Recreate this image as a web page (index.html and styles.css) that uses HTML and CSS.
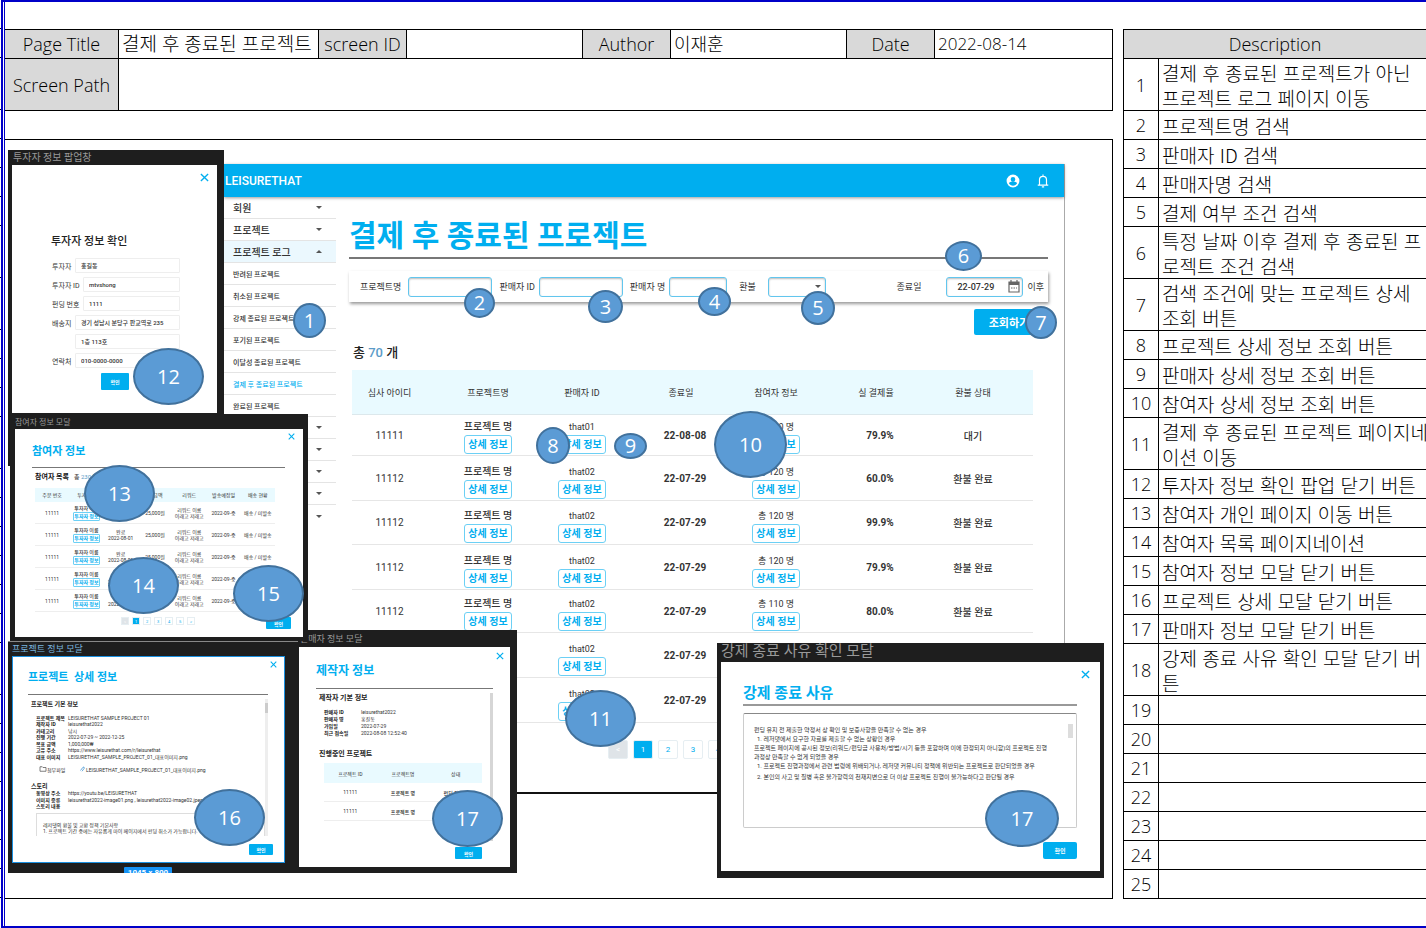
FILE: index.html
```
<!DOCTYPE html>
<html lang="ko">
<head>
<meta charset="utf-8">
<title>결제 후 종료된 프로젝트</title>
<link rel="stylesheet" href="styles.css">
</head>
<body>
<svg class="defs" aria-hidden="true">
  <symbol id="x" viewBox="0 0 10 10"><path d="M1 1L9 9M9 1L1 9" fill="none" stroke="#00aeef" stroke-width="1.5"/></symbol>
  <symbol id="down" viewBox="0 0 8 4"><path d="M0 0H8L4 4Z" fill="#555"/></symbol>
  <symbol id="up" viewBox="0 0 8 4"><path d="M0 4H8L4 0Z" fill="#555"/></symbol>
</svg>
<div class="sheet">
  <div class="gutter"><i class="first"></i><i></i><i class="tall"></i><i></i><i></i><i></i><i></i><i class="tall"></i><i class="tall"></i><i></i><i></i><i></i><i class="tall"></i><i></i><i></i><i></i><i></i><i></i><i></i><i class="tall"></i><i></i><i></i><i></i><i></i><i></i><i></i><i></i></div>
  <div class="frame">
    <main class="left">
      <table class="meta">
        <colgroup><col class="c1"><col class="c2"><col class="c3"><col class="c4"><col class="c3"><col class="c4"><col class="c3"><col></colgroup>
        <tr><th>Page Title</th><td class="ko">결제 후 종료된 프로젝트</td><th>screen ID</th><td></td><th>Author</th><td>이재훈</td><th>Date</th><td class="date">2022-08-14</td></tr>
        <tr class="path"><th>Screen Path</th><td colspan="7"></td></tr>
      </table>

      <div class="canvas">
        <section class="app">
          <header class="appbar"><b>LEISURETHAT</b>
            <svg class="user" viewBox="0 0 24 24"><path fill="#fff" fill-rule="evenodd" d="M12 1a11 11 0 1 0 0 22a11 11 0 0 0 0-22zM12 5a4 4 0 1 1 0 8a4 4 0 0 1 0-8zM12 20c-3 0-5.600-1.500-7-4c0-2.300 4.700-3.300 7-3.300s7 1 7 3.300c-1.400 2.500-4 4-7 4z"/></svg>
            <svg class="bell" viewBox="0 0 24 24"><path fill="none" stroke="#fff" stroke-width="2" d="M3 19H21M6 19V10a6 6 0 0 1 12 0V19M12 1V4M10 22H14"/></svg>
          </header>
          <div class="appbody">
            <nav class="side">
              <a class="top">회원<svg><use href="#down"/></svg></a>
              <a class="top">프로젝트<svg><use href="#down"/></svg></a>
              <a class="top open">프로젝트 로그<svg><use href="#up"/></svg></a>
              <a>반려된 프로젝트</a><a>취소된 프로젝트</a><a>강제 종료된 프로젝트</a><a>포기된 프로젝트</a><a>이달성 종료된 프로젝트</a><a class="now">결제 후 종료된 프로젝트</a><a>완료된 프로젝트</a>
              <a class="top"><svg><use href="#down"/></svg></a>
              <a class="top"><svg><use href="#down"/></svg></a>
              <a class="top"><svg><use href="#down"/></svg></a>
              <a class="top"><svg><use href="#down"/></svg></a>
              <a class="top last"><svg><use href="#down"/></svg></a>
            </nav>
            <div class="content">
              <h1>결제 후 종료된 프로젝트</h1>
              <form class="filter">
                <label for="f1">프로젝트명</label><input id="f1" class="wide">
                <label for="f2">판매자 ID</label><input id="f2" class="wide">
                <label for="f3">판매자 명</label><input id="f3" class="mid">
                <label for="f4" class="lb4">환불</label><span class="pick"><select id="f4" class="mid"><option></option></select><svg><use href="#down"/></svg></span>
                <label for="f5" class="end">종료일</label><span class="datebox"><input id="f5" value="22-07-29"><svg viewBox="0 0 12 13"><path d="M1 2H11V12H1ZM3 0V2M9 0V2" fill="none" stroke="#666" stroke-width="1.200"/><path d="M1 2H11V5H1Z" fill="#666"/><path d="M3 8H9" stroke="#666" stroke-dasharray="1.500 1"/></svg></span><span class="after">이후</span>
              </form>
              <button class="search">조회하기</button>
              <p class="count">총 <span>70</span> 개</p>
              <table class="list">
                <colgroup><col class="l1"><col class="l2"><col class="l3"><col class="l4"><col class="l5"><col class="l6"><col></colgroup>
                <tr><th>심사 아이디</th><th>프로젝트명</th><th>판매자 ID</th><th>종료일</th><th>참여자 정보</th><th>실 결제율</th><th>환불 상태</th></tr>
                <tr class="r1"><td>11111</td><td class="s"><b>프로젝트 명</b><button>상세 정보</button></td><td class="s">that01<button>상세 정보</button></td><td class="n">22-08-08</td><td class="s">총 120 명<button>상세 정보</button></td><td class="n">79.9%</td><td class="k">대기</td></tr>
                <tr><td>11112</td><td class="s"><b>프로젝트 명</b><button>상세 정보</button></td><td class="s">that02<button>상세 정보</button></td><td class="n">22-07-29</td><td class="s">총 120 명<button>상세 정보</button></td><td class="n">60.0%</td><td class="k">환불 완료</td></tr>
                <tr class="r3"><td>11112</td><td class="s"><b>프로젝트 명</b><button>상세 정보</button></td><td class="s">that02<button>상세 정보</button></td><td class="n">22-07-29</td><td class="s">총 120 명<button>상세 정보</button></td><td class="n">99.9%</td><td class="k">환불 완료</td></tr>
                <tr><td>11112</td><td class="s"><b>프로젝트 명</b><button>상세 정보</button></td><td class="s">that02<button>상세 정보</button></td><td class="n">22-07-29</td><td class="s">총 120 명<button>상세 정보</button></td><td class="n">79.9%</td><td class="k">환불 완료</td></tr>
                <tr class="r5"><td>11112</td><td class="s"><b>프로젝트 명</b><button>상세 정보</button></td><td class="s">that02<button>상세 정보</button></td><td class="n">22-07-29</td><td class="s">총 110 명<button>상세 정보</button></td><td class="n">80.0%</td><td class="k">환불 완료</td></tr>
                <tr><td></td><td></td><td class="s">that02<button>상세 정보</button></td><td class="n">22-07-29</td><td></td><td></td><td></td></tr>
                <tr><td></td><td></td><td class="s">that02<button>상세 정보</button></td><td class="n">22-07-29</td><td></td><td></td><td></td></tr>
              </table>
              <div class="pager"><button class="prev">&lt;</button><button class="on">1</button><button>2</button><button>3</button><button>4</button></div>
            </div>
          </div>
        </section>

        <section class="board bA">
          <h6>투자자 정보 팝업창</h6>
          <div class="modal">
            <svg class="close"><use href="#x"/></svg>
            <h2>투자자 정보 확인</h2>
            <div class="row"><label for="a1">투자자</label><input id="a1" value="홍길동"></div>
            <div class="row long"><label for="a2">투자자 ID</label><input id="a2" value="mtvshong"></div>
            <div class="row long"><label for="a3">펀딩 번호</label><input id="a3" value="1111"></div>
            <div class="row"><label for="a4">배송지</label><input id="a4" value="경기 성남시 분당구 판교역로 235"></div>
            <div class="row"><label for="a5"></label><input id="a5" value="1층 113호"></div>
            <div class="row"><label for="a6">연락처</label><input id="a6" value="010-0000-0000"></div>
            <button class="ok">확인</button>
          </div>
        </section>

        <section class="board bD">
          <h6>판매자 정보 모달</h6>
          <div class="modal">
            <svg class="close"><use href="#x"/></svg>
            <h2>제작자 정보</h2>
            <div class="scroll">
              <h3>제작자 기본 정보</h3>
              <dl><dt>판매자 ID</dt><dd>leisurethat2022</dd><dt>판매자 명</dt><dd>홍길동</dd><dt>가입일</dt><dd>2022-07-29</dd><dt>최근 접속일</dt><dd>2022-08-08 12:52:40</dd></dl>
              <h3>진행중인 프로젝트</h3>
              <table><tr><th>프로젝트 ID</th><th>프로젝트명</th><th>상태</th></tr><tr><td>11111</td><td class="k">프로젝트 명</td><td class="k">펀딩 진행중</td></tr><tr><td>11111</td><td class="k">프로젝트 명</td><td></td></tr></table>
            </div>
            <button class="ok">확인</button>
          </div>
        </section>

        <section class="board bC">
          <h6>프로젝트 정보 모달</h6>
          <div class="modal">
            <svg class="close"><use href="#x"/></svg>
            <h2>프로젝트&nbsp; 상세 정보</h2>
            <div class="scroll">
              <h3>프로젝트 기본 정보</h3>
              <dl class="seven"><dt>프로젝트 제목</dt><dd>LEISURETHAT SAMPLE PROJECT 01</dd><dt>제작자 ID</dt><dd>leisurethat2022</dd><dt>카테고리</dt><dd>낚시</dd><dt>진행 기간</dt><dd>2022-07-29 ~ 2022-12-25</dd><dt>목표 금액</dt><dd>1,000,000₩</dd><dt>고유 주소</dt><dd>https://www.leisurethat.com/r/leisurethat</dd><dt>대표 이미지</dt><dd>LEISURETHAT_SAMPLE_PROJECT_01_대표이미지.png</dd></dl>
              <p class="file"><svg viewBox="0 0 10 8"><path d="M1 1H4L5 2H9V7H1Z" fill="none" stroke="#555"/></svg><span>첨부파일</span><svg viewBox="0 0 10 8"><path d="M3 6L6 2M5 7L8 3Q8 0 6 2" fill="none" stroke="#3b8fd0"/></svg>LEISURETHAT_SAMPLE_PROJECT_01_대표이미지.png</p>
              <h3 class="story">스토리</h3>
              <dl class="three"><dt>동영상 주소</dt><dd>https://youtu.be/LEISURETHAT</dd><dt>이미지 종류</dt><dd>leisurethat2022-image01.png , leisurethat2022-image02.jpeg , leisurethat2022</dd><dt>스토리 내용</dt><dd></dd></dl>
              <p class="note">레저댓의 환불 및 교환 정책 기본사항<br>1. 프로젝트 기간 중에는 자유롭게 마이 페이지에서 펀딩 취소가 가능합니다.</p>
            </div>
            <button class="ok">확인</button>
          </div>
          <span class="size">1045 × 800</span>
        </section>

        <section class="board bB">
          <h6>참여자 정보 모달</h6>
          <div class="modal">
            <svg class="close"><use href="#x"/></svg>
            <h2>참여자 정보</h2>
            <p class="sum"><b>참여자 목록</b>총 <span>230</span> 명</p>
            <table>
              <tr><th>주문 번호</th><th>투자자명</th><th>결제상태</th><th>총 금액</th><th>리워드</th><th>발송예정일</th><th>배송 현황</th></tr>
              <tr><td>11111</td><td class="k">투자자 이름<button>투자자 정보</button></td><td>완료<br>2022-08-01</td><td>25,000원</td><td>리워드 이름<br>이래고 저래고</td><td>2022-09-중</td><td>배송 / 미발송</td></tr>
              <tr><td>11111</td><td class="k">투자자 이름<button>투자자 정보</button></td><td>완료<br>2022-08-01</td><td>25,000원</td><td>리워드 이름<br>이래고 저래고</td><td>2022-09-중</td><td>배송 / 미발송</td></tr>
              <tr><td>11111</td><td class="k">투자자 이름<button>투자자 정보</button></td><td>완료<br>2022-08-01</td><td>25,000원</td><td>리워드 이름<br>이래고 저래고</td><td>2022-09-중</td><td>배송 / 미발송</td></tr>
              <tr><td>11111</td><td class="k">투자자 이름<button>투자자 정보</button></td><td>완료<br>2022-08-01</td><td>25,000원</td><td>리워드 이름<br>이래고 저래고</td><td>2022-09-중</td><td>배송 / 미발송</td></tr>
              <tr><td>11111</td><td class="k">투자자 이름<button>투자자 정보</button></td><td>완료<br>2022-08-01</td><td>25,000원</td><td>리워드 이름<br>이래고 저래고</td><td>2022-09-중</td><td>배송 / 미발송</td></tr>
            </table>
            <div class="foot"><div class="pager"><button class="prev">&lt;</button><button class="on">1</button><button>2</button><button>3</button><button>4</button><button>5</button><button>&gt;</button></div><button class="ok">확인</button></div>
          </div>
        </section>

        <section class="board bE">
          <h6>강제 종료 사유 확인 모달</h6>
          <div class="modal">
            <svg class="close"><use href="#x"/></svg>
            <h2>강제 종료 사유</h2>
            <div class="reason">펀딩 유지 전 제출한 약정서 상 확인 및 보증사항을 만족할 수 없는 경우<br>&nbsp; 1. 레저댓에서 요구한 자료를 제출할 수 없는 상황인 경우<br>프로젝트 페이지에 공시된 정보(리워드/펀딩금 사용처/방법/시기 등을 포함하며 이에 한정되지 아니함)의 프로젝트 진행<br>과정상 만족할 수 없게 되었을 경우<br>&nbsp; 1. 프로젝트 진행과정에서 관련 법령에 위배되거나, 레저댓 커뮤니티 정책에 위반되는 프로젝트로 판단되었을 경우<br><span>&nbsp; 2. 본인의 사고 및 질병 혹은 불가항력의 천재지변으로 더 이상 프로젝트 진행이 불가능하다고 판단될 경우</span></div>
            <button class="ok">확인</button>
          </div>
        </section>

        <span class="pin p1">1</span><span class="pin p2">2</span><span class="pin p3">3</span><span class="pin p4">4</span><span class="pin p5">5</span><span class="pin p6">6</span><span class="pin p7">7</span><span class="pin p8">8</span><span class="pin p9">9</span><span class="pin p10">10</span><span class="pin big p11">11</span><span class="pin big p12">12</span><span class="pin big p13">13</span><span class="pin big p14">14</span><span class="pin big p15">15</span><span class="pin big p16">16</span><span class="pin big p17">17</span><span class="pin big p18">17</span>
      </div>
    </main>

    <table class="desc">
      <colgroup><col class="d1"><col></colgroup>
      <tr><th colspan="2">Description</th></tr>
      <tr class="two"><th>1</th><td>결제 후 종료된 프로젝트가 아닌<br>프로젝트 로그 페이지 이동</td></tr>
      <tr><th>2</th><td>프로젝트명 검색</td></tr>
      <tr><th>3</th><td>판매자 ID 검색</td></tr>
      <tr><th>4</th><td>판매자명 검색</td></tr>
      <tr><th>5</th><td>결제 여부 조건 검색</td></tr>
      <tr class="two"><th>6</th><td>특정 날짜 이후 결제 후 종료된 프<br>로젝트 조건 검색</td></tr>
      <tr class="two"><th>7</th><td>검색 조건에 맞는 프로젝트 상세<br>조회 버튼</td></tr>
      <tr><th>8</th><td>프로젝트 상세 정보 조회 버튼</td></tr>
      <tr><th>9</th><td>판매자 상세 정보 조회 버튼</td></tr>
      <tr><th>10</th><td>참여자 상세 정보 조회 버튼</td></tr>
      <tr class="two"><th>11</th><td>결제 후 종료된 프로젝트 페이지네<br>이션 이동</td></tr>
      <tr><th>12</th><td>투자자 정보 확인 팝업 닫기 버튼</td></tr>
      <tr><th>13</th><td>참여자 개인 페이지 이동 버튼</td></tr>
      <tr><th>14</th><td>참여자 목록 페이지네이션</td></tr>
      <tr><th>15</th><td>참여자 정보 모달 닫기 버튼</td></tr>
      <tr><th>16</th><td>프로젝트 상세 모달 닫기 버튼</td></tr>
      <tr><th>17</th><td>판매자 정보 모달 닫기 버튼</td></tr>
      <tr class="two"><th>18</th><td>강제 종료 사유 확인 모달 닫기 버<br>튼</td></tr>
      <tr><th>19</th><td></td></tr>
      <tr><th>20</th><td></td></tr>
      <tr><th>21</th><td></td></tr>
      <tr><th>22</th><td></td></tr>
      <tr><th>23</th><td></td></tr>
      <tr><th>24</th><td></td></tr>
      <tr><th>25</th><td></td></tr>
    </table>
  </div>
</div>
</body>
</html>
```
FILE: styles.css
```
* { box-sizing: border-box; margin: 0; padding: 0; }
body { background: #fff; color: #000; font-family: "Open Sans", "Noto Sans CJK KR", sans-serif; overflow: hidden; }
button, input, select { font: inherit; color: inherit; border: 0; background: none; border-radius: 0; appearance: none; min-width: 0; }
table { border-collapse: separate; border-spacing: 0; }
.defs { position: absolute; width: 0; height: 0; }

/* sheet */
.sheet { display: flex; min-height: 928px; }
.gutter { width: 1px; flex: none; display: flex; flex-direction: column; }
.gutter i { height: 29px; flex: none; border-bottom: 1px solid #000; }
.gutter .tall { height: 52px; }
.frame { flex: 1; display: flex; align-items: flex-start; gap: 10px; position: relative; padding: 27px 0 0 2px; border-left: 2px solid #0000c8; border-top: 2px solid #0000c8; border-bottom: 2px solid #0000c8; }
.frame::before { content: ""; position: absolute; left: 1px; top: 0; bottom: 0; width: 1px; background: #0000c8; }
.left { flex: 1; min-width: 0; }

.meta { width: 100%; table-layout: fixed; border-right: 1px solid #000; border-bottom: 1px solid #000; font-size: 18px; line-height: 24px; }
.meta th, .meta td { height: 29px; border-top: 1px solid #000; border-left: 1px solid #000; white-space: nowrap; }
.meta th { background: #d9d9d9; font-weight: 300; }
.meta th:first-child { border-left: 0; }
.meta td { padding: 0 3px; font-size: 18px; font-weight: 300; }
.meta .ko { font-size: 19px; }
.meta .date { font-size: 17px; }
.meta .path th, .meta .path td { height: 52px; }
.c1 { width: 113px; } .c2 { width: 200px; } .c3 { width: 88px; } .c4 { width: 176px; }

.desc { width: 303px; flex: none; table-layout: fixed; border-bottom: 1px solid #000; border-left: 1px solid #000; }
.d1 { width: 34px; }
.desc th, .desc td { height: 29px; border-top: 1px solid #000; }
.desc th { font-size: 18px; font-weight: 300; line-height: 24px; }
.desc th[colspan] { background: #d9d9d9; }
.desc td { border-left: 1px solid #000; padding: 0 3px; font: 300 19px/25px "Noto Sans CJK KR", sans-serif; white-space: nowrap; }
.desc .two th, .desc .two td { height: 52px; }

/* canvas */
.canvas { position: relative; height: 760px; margin-top: 28px; border: 1px solid #000; border-left: 0; font-family: Roboto, "Noto Sans CJK KR", sans-serif; overflow: hidden; }
.app { position: absolute; left: 219px; top: 24px; width: 841px; height: 630px; background: #fff; border-right: 1px solid #aaa; border-bottom: 2px solid #111; color: #333; }
.appbar { height: 33px; background: #00aeef; color: #fff; display: flex; align-items: center; gap: 16px; padding: 0 14px 0 1px; font-size: 12px; box-shadow: 0 1px 3px #0006; position: relative; }
.appbar b { flex: 1; font-weight: 500; }
.appbar svg { width: 14px; height: 14px; }
.appbody { display: flex; }
.side { width: 112px; flex: none; }
.side a { display: flex; align-items: center; height: 22px; padding: 0 14px 0 9px; border-bottom: 1px solid #e4e4e4; font-size: 7px; font-weight: 500; white-space: nowrap; }
.side .top { font-size: 10px; }
.side svg { width: 6px; height: 3px; margin-left: auto; }
.side .open { background: #ebf8fe; }
.side .now { color: #00aeef; }
.side .last { border: 0; }
.content { flex: 1; min-width: 0; padding: 17px 16px 0 13px; }
.content h1 { height: 45px; border-bottom: 2px solid #777; color: #00aeef; font-size: 30px; line-height: 44px; font-weight: 700; white-space: nowrap; }
.filter { display: flex; align-items: center; height: 31px; margin-top: 12px; padding: 0 4px 0 11px; box-shadow: 1px 2px 3px #0006; font-size: 9px; white-space: nowrap; }
.filter label { margin-right: 4px; }
.filter label:first-child { margin-right: 7px; }
.filter input, .filter select { height: 20px; border: 1px solid #62c6ee; border-radius: 3px; box-shadow: inset 0 1px 2px #0004; background: #fff; }
.filter .wide { width: 84px; margin-right: 7px; }
.filter .mid { width: 58px; }
.filter .lb4 { margin: 0 12px; }
.pick, .datebox { display: flex; align-items: center; position: relative; }
.pick svg { position: absolute; right: 5px; width: 6px; height: 3px; }
.filter .end { margin-left: auto; margin-right: 25px; }
.datebox input { width: 77px; padding-left: 10px; font-weight: 500; }
.datebox svg { position: absolute; right: 3px; width: 12px; height: 13px; }
.after { margin-left: 4px; }
.search { display: block; width: 74px; height: 26px; margin: 7px 0 0 auto; padding-right: 4px; background: #00aeef; color: #fff; border-radius: 2px; font-size: 11px; font-weight: 700; }
.count { margin: 8px 0 7px 4px; font-size: 13px; line-height: 20px; color: #222; font-weight: 500; }
.count span { color: #5b9bc8; }
.list { width: 681px; margin-left: 3px; table-layout: fixed; font-size: 10px; text-align: center; }
.l1 { width: 87px; } .l2 { width: 98px; } .l3 { width: 90px; } .l4 { width: 108px; } .l5 { width: 82px; } .l6 { width: 118px; }
.list th { height: 45px; background: #e9faff; border-bottom: 1px solid #dce8ec; font-size: 9px; font-weight: 400; }
.list td { height: 45px; border-bottom: 1px solid #e6e6e6; }
.list .r1 td { height: 41px; }
.list .r3 td { height: 44px; }
.list .r5 td { height: 43px; }
.list td:first-child, .list th:first-child { padding-right: 12px; }
.list td:last-child, .list th:last-child { padding-right: 22px; }
.list .s { vertical-align: bottom; padding-bottom: 1px; font-size: 9px; line-height: 16px; }
.list b, .list .k { font-size: 10px; font-weight: 500; }
.list b { display: block; }
.list .n { padding-left: 8px; font-size: 10px; font-weight: 700; }
.list button { display: block; width: 48px; height: 19px; margin: 0 auto; border: 1px solid #6cd0f5; border-radius: 3px; color: #00aeef; font-size: 10px; font-weight: 700; line-height: 16px; background: #fff; }
.pager { display: flex; gap: 5px; margin: 17px 0 0 259px; color: #00aeef; font-size: 8px; }
.pager button { width: 20px; height: 19px; border: 1px solid #e6eef2; border-radius: 2px; }
.pager .prev { background: #dfe4e8; color: #fff; }
.pager .on { background: #00aeef; color: #fff; }

/* boards with modals */
.board { position: absolute; background: #1e1e1e; color: #333; overflow: hidden; }
.board h6 { color: #999; font-weight: 400; white-space: nowrap; }
.modal { position: relative; background: #fff; display: flex; flex-direction: column; }
.modal h2 { color: #00aeef; font-weight: 700; white-space: nowrap; }
.close { position: absolute; right: 8px; top: 8px; width: 9px; height: 9px; }
.close use { width: 100%; height: 100%; }
.ok { background: #00aeef; color: #fff; border-radius: 1px; font-size: 5px; font-weight: 700; align-self: flex-end; }
.board table { table-layout: fixed; text-align: center; white-space: nowrap; }
.board th { background: #e9faff; font-weight: 400; }
.board td { border-bottom: 1px solid #eee; }
.board h3 { color: #222; font-weight: 700; white-space: nowrap; }
.board .k { font-weight: 500; }

.bA { left: 3px; top: 10px; width: 216px; height: 316px; padding: 0 7px 0 4px; }
.bA h6 { font-size: 10px; line-height: 15px; padding-left: 1px; }
.bA .modal { height: 248px; padding: 68px 37px 0 39px; }
.bA h2 { color: #222; font-size: 11px; line-height: 18px; font-weight: 500; margin-bottom: 7px; }
.row { display: flex; align-items: center; height: 15px; margin-bottom: 4px; font-size: 7px; white-space: nowrap; }
.row label { width: 24px; padding-left: 1px; flex: none; }
.row.long label { width: 32px; }
.row input { flex: 1; height: 15px; padding-left: 5px; border: 1px solid #eee; border-radius: 1px; font-size: 6px; font-weight: 500; }
.bA .ok { align-self: flex-start; width: 28px; height: 17px; margin: 1px 0 0 50px; }

.bB { left: 5px; top: 274px; width: 298px; height: 227px; padding: 0 5px; }
.bB h6 { font-size: 8px; line-height: 15px; padding-top: 1px; height: 15px; }
.bB .modal { height: 208px; padding: 14px 12px 0 17px; }
.bB .close { top: 4px; width: 7px; height: 7px; }
.bB h2 { font-size: 11px; line-height: 18px; height: 25px; border-bottom: 1px solid #777; margin-right: 6px; }
.sum { margin: 4px 0 6px 3px; font-size: 6px; line-height: 10px; }
.sum b { font-size: 7px; margin-right: 5px; color: #111; }
.sum span { color: #5b9bc8; }
.bB table { width: 240px; margin-left: 3px; font-size: 5px; line-height: 6px; }
.bB th { height: 14px; }
.bB td { height: 22px; }
.bB td button { display: block; width: 27px; height: 9px; margin: 1px auto 0; border: 1px solid #6cd0f5; border-radius: 1px; color: #00aeef; font-size: 5px; line-height: 6px; font-weight: 700; }
.foot { display: flex; align-items: flex-start; justify-content: space-between; margin-top: 5px; }
.foot .pager { gap: 3px; margin: 0 0 0 89px; font-size: 4px; }
.foot .pager button { width: 8px; height: 8px; border-radius: 0; }
.foot .ok { align-self: auto; width: 25px; height: 12px; }

.bC { left: 3px; top: 501px; width: 290px; height: 232px; padding: 0 13px 0 4px; border-top: 1px solid #888; }
.bC h6 { font-size: 9px; line-height: 14px; color: #79b4de; }
.bC .modal { height: 207px; padding: 12px 11px 0 15px; border: 1px solid #1b90e0; }
.bC .close { top: 4px; right: 7px; width: 7px; height: 7px; }
.bC h2 { font-size: 11px; line-height: 18px; height: 26px; border-bottom: 1px solid #777; margin-right: 5px; }
.scroll { position: relative; border-right: 3px solid #eee; }
.bC .scroll { height: 137px; margin: 4px 5px 0 0; padding-left: 3px; overflow: hidden; }
.bC .scroll::after { content: ""; position: absolute; right: -3px; top: 4px; width: 3px; height: 10px; background: #ccc; }
.bC .scroll { border-right-width: 0; box-shadow: inset -3px 0 #eee; }
.bC .scroll::after { right: 0; }
.board dl { display: grid; grid-template-columns: 32px 1fr; grid-auto-rows: 1fr; margin-left: 5px; font-size: 5px; white-space: nowrap; }
.board dt { font-weight: 700; color: #222; }
.bC h3 { font-size: 6px; line-height: 9px; }
.bC .seven { height: 45px; line-height: 6px; margin-top: 7px; }
.bC .three { height: 20px; line-height: 6px; }
.file { display: flex; align-items: center; margin: 5px 0 0 8px; height: 8px; font-size: 5px; white-space: nowrap; }
.file svg { width: 8px; height: 6px; }
.file span { width: 31px; }
.bC .story { margin-top: 8px; }
.note { height: 30px; margin: 3px 3px 0 5px; padding: 8px 6px; border: 1px solid #ddd; font-size: 5px; line-height: 6px; white-space: nowrap; }
.bC .ok { width: 24px; height: 11px; margin-top: 8px; }
.size { display: block; width: 48px; height: 12px; margin: 4px 0 0 112px; background: #1592f5; color: #fff; border-radius: 1px; font-size: 8px; font-weight: 700; line-height: 12px; text-align: center; }

.bD { left: 292px; top: 490px; width: 220px; height: 243px; padding: 0 7px 0 2px; }
.bD h6 { font-size: 9px; line-height: 17px; height: 17px; padding-top: 1px; padding-left: 1px; }
.bD .modal { height: 220px; padding: 14px 17px 0 17px; }
.bD .close { top: 5px; right: 6px; width: 8px; height: 8px; }
.bD h2 { font-size: 12px; line-height: 20px; height: 28px; border-bottom: 1px solid #777; }
.bD .scroll { height: 148px; margin-top: 4px; padding-left: 3px; border-color: #d6d6d6; }
.bD h3 { font-size: 7px; line-height: 10px; }
.bD dl { grid-template-columns: 37px 1fr; line-height: 7px; margin: 6px 0 12px 5px; }
.bD table { width: 158px; margin: 4px 0 0 5px; font-size: 5px; }
.bD th { height: 20px; }
.bD td { height: 19px; }
.bD .ok { width: 27px; height: 12px; margin: 6px 11px 0 0; }

.bE { left: 712px; top: 503px; width: 387px; height: 235px; padding: 0 4px; }
.bE h6 { font-size: 15px; line-height: 17px; height: 19px; }
.bE .modal { height: 209px; padding: 19px 23px 0 22px; }
.bE .close { right: 10px; }
.bE h2 { font-size: 15px; line-height: 24px; height: 25px; border-bottom: 2px solid #999; }
.reason { position: relative; height: 115px; margin-top: 7px; padding: 11px 10px; border: 1px solid #ccc; border-top-color: #888; border-radius: 2px; font-size: 6px; line-height: 9px; white-space: nowrap; }
.reason span { display: block; margin-top: 2px; }
.reason::after { content: ""; position: absolute; right: 3px; top: 10px; width: 5px; height: 14px; background: #ddd; }
.bE .ok { width: 34px; height: 17px; margin-top: 14px; border-radius: 2px; font-size: 6px; }

/* numbered pins */
.pin { position: absolute; display: flex; align-items: center; justify-content: center; border: 2px solid #41719c; border-radius: 50%; background: #5b9bd5; color: #fff; font: 400 20px/20px "Open Sans", sans-serif; width: 34px; height: 34px; }
.big { width: 71px; height: 57px; }
.p1 { left: 288px; top: 163px; width: 33px; height: 35px; }
.p2 { left: 459px; top: 148px; width: 31px; height: 30px; }
.p3 { left: 583px; top: 150px; width: 35px; height: 33px; }
.p4 { left: 693px; top: 147px; width: 33px; height: 29px; }
.p5 { left: 796px; top: 151px; }
.p6 { left: 940px; top: 101px; width: 37px; height: 30px; }
.p7 { left: 1020px; top: 166px; width: 32px; height: 33px; }
.p8 { left: 531px; top: 287px; height: 37px; }
.p9 { left: 609px; top: 293px; width: 33px; height: 26px; }
.p10 { left: 709px; top: 271px; width: 73px; height: 67px; }
.p11 { left: 560px; top: 550px; }
.p12 { left: 128px; top: 208px; }
.p13 { left: 79px; top: 325px; }
.p14 { left: 103px; top: 417px; }
.p15 { left: 228px; top: 425px; }
.p16 { left: 189px; top: 649px; }
.p17 { left: 427px; top: 650px; }
.p18 { left: 980px; top: 650px; width: 74px; }
```
